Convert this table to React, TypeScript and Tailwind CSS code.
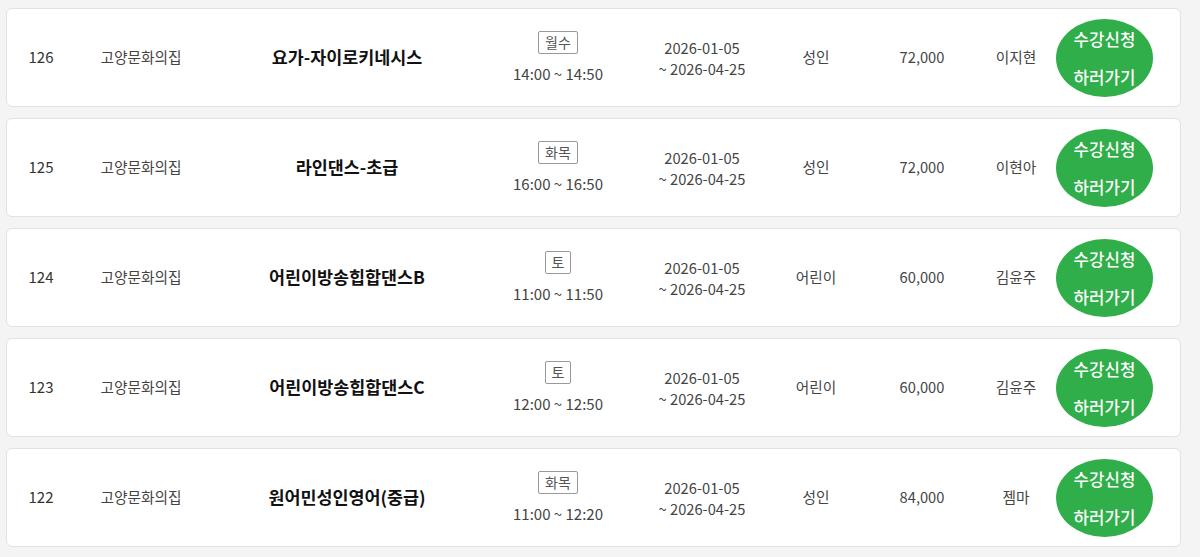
import React from "react"

type Course = {
  no: number
  place: string
  title: string
  days: string
  time: string
  start: string
  end: string
  target: string
  price: string
  teacher: string
}

const courses: Course[] = [
  { no: 126, place: "고양문화의집", title: "요가-자이로키네시스", days: "월수", time: "14:00 ~ 14:50", start: "2026-01-05", end: "2026-04-25", target: "성인", price: "72,000", teacher: "이지현" },
  { no: 125, place: "고양문화의집", title: "라인댄스-초급", days: "화목", time: "16:00 ~ 16:50", start: "2026-01-05", end: "2026-04-25", target: "성인", price: "72,000", teacher: "이현아" },
  { no: 124, place: "고양문화의집", title: "어린이방송힙합댄스B", days: "토", time: "11:00 ~ 11:50", start: "2026-01-05", end: "2026-04-25", target: "어린이", price: "60,000", teacher: "김윤주" },
  { no: 123, place: "고양문화의집", title: "어린이방송힙합댄스C", days: "토", time: "12:00 ~ 12:50", start: "2026-01-05", end: "2026-04-25", target: "어린이", price: "60,000", teacher: "김윤주" },
  { no: 122, place: "고양문화의집", title: "원어민성인영어(중급)", days: "화목", time: "11:00 ~ 12:20", start: "2026-01-05", end: "2026-04-25", target: "성인", price: "84,000", teacher: "젬마" },
]

function CourseRow({ c }: { c: Course }) {
  return (
    <div className="flex h-[99px] items-center rounded-[6px] border border-[#e2e2e2] bg-white text-[#333]">
      <div className="w-[68px] text-center text-[15px]">{c.no}</div>
      <div className="w-[132px] text-center text-[14.7px] text-[#444]">{c.place}</div>
      <div className="w-[280px] text-center text-[17.4px] font-semibold text-[#111]">{c.title}</div>
      <div className="flex w-[142px] flex-col items-center">
        <span className="rounded-[2px] border border-[#999] px-[6px] text-[14px] leading-[21px] text-[#555]">
          {c.days}
        </span>
        <span className="mt-[9px] text-[15px] leading-[22px] text-[#444]">{c.time}</span>
      </div>
      <div className="flex w-[146px] flex-col items-center text-[14.7px] leading-[21px] text-[#444]">
        <span>{c.start}</span>
        <span>~ {c.end}</span>
      </div>
      <div className="w-[82px] text-center text-[14.7px] text-[#444]">{c.target}</div>
      <div className="w-[130px] text-center text-[14.7px] text-[#444]">{c.price}</div>
      <div className="w-[58px] text-center text-[14.7px] text-[#444]">{c.teacher}</div>
      <button className="ml-[11px] flex h-[78px] w-[97px] flex-col items-center justify-center rounded-[50%] bg-[#2fae4a] text-[16.8px] font-medium leading-[38px] text-white">
        <span>수강신청</span>
        <span>하러가기</span>
      </button>
    </div>
  )
}

export default function App() {
  return (
    <div
      className="min-h-[557px] bg-[#f4f4f4] pl-[6px] pr-[19px] pt-[8px]"
      style={{ fontFamily: '"Noto Sans CJK KR", "Noto Sans", sans-serif' }}
    >
      <div className="flex flex-col gap-[11px]">
        {courses.map((c) => (
          <CourseRow key={c.no} c={c} />
        ))}
      </div>
    </div>
  )
}
